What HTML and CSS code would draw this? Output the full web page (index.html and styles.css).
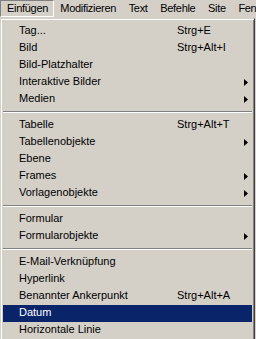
FILE: index.html
```html
<!DOCTYPE html>
<html>
<head>
<meta charset="utf-8">
<link rel="stylesheet" href="styles.css">
</head>
<body>
<div class="menubar">
  <span class="mb-item mb-open">Einfügen</span>
  <span class="mb-item">Modifizieren</span>
  <span class="mb-item">Text</span>
  <span class="mb-item">Befehle</span>
  <span class="mb-item">Site</span>
  <span class="mb-item">Fenster</span>
</div>
<div class="menu">
  <div class="item"><span class="label">Tag...</span><span class="key">Strg+E</span></div>
  <div class="item"><span class="label">Bild</span><span class="key">Strg+Alt+I</span></div>
  <div class="item"><span class="label">Bild-Platzhalter</span></div>
  <div class="item"><span class="label">Interaktive Bilder</span><svg class="arrow" width="4" height="7" viewBox="0 0 4 7"><polygon points="0,0 4,3.5 0,7"/></svg></div>
  <div class="item"><span class="label">Medien</span><svg class="arrow" width="4" height="7" viewBox="0 0 4 7"><polygon points="0,0 4,3.5 0,7"/></svg></div>
  <div class="sep"></div>
  <div class="item"><span class="label">Tabelle</span><span class="key">Strg+Alt+T</span></div>
  <div class="item"><span class="label">Tabellenobjekte</span><svg class="arrow" width="4" height="7" viewBox="0 0 4 7"><polygon points="0,0 4,3.5 0,7"/></svg></div>
  <div class="item"><span class="label">Ebene</span></div>
  <div class="item"><span class="label">Frames</span><svg class="arrow" width="4" height="7" viewBox="0 0 4 7"><polygon points="0,0 4,3.5 0,7"/></svg></div>
  <div class="item"><span class="label">Vorlagenobjekte</span><svg class="arrow" width="4" height="7" viewBox="0 0 4 7"><polygon points="0,0 4,3.5 0,7"/></svg></div>
  <div class="sep"></div>
  <div class="item"><span class="label">Formular</span></div>
  <div class="item"><span class="label">Formularobjekte</span><svg class="arrow" width="4" height="7" viewBox="0 0 4 7"><polygon points="0,0 4,3.5 0,7"/></svg></div>
  <div class="sep"></div>
  <div class="item"><span class="label">E-Mail-Verknüpfung</span></div>
  <div class="item"><span class="label">Hyperlink</span></div>
  <div class="item"><span class="label">Benannter Ankerpunkt</span><span class="key">Strg+Alt+A</span></div>
  <div class="item active"><span class="label">Datum</span></div>
  <div class="item"><span class="label">Horizontale Linie</span></div>
</div>
</body>
</html>
```

FILE: styles.css
```css
html, body {
  margin: 0;
  padding: 0;
  background: #d4d0c8;
  overflow: hidden;
}
body {
  width: 256px;
  height: 339px;
  font-family: "Liberation Sans", Arial, sans-serif;
  font-size: 11px;
  color: #000;
}
.menubar {
  display: flex;
  height: 18px;
  white-space: nowrap;
  overflow: hidden;
}
.mb-item {
  display: block;
  height: 17px;
  line-height: 16px;
  padding: 0 6.3px;
  letter-spacing: -0.3px;
  box-sizing: border-box;
  flex: none;
}
.mb-open {
  padding: 0 5px 0 6px;
  border: 1px solid;
  border-color: #808080 #ffffff #ffffff #808080;
  line-height: 14px;
}
.menu {
  width: 255px;
  box-sizing: border-box;
  border: 1px solid;
  border-color: #d4d0c8 #404040 #404040 #d4d0c8;
  box-shadow: inset 1px 1px 0 #ffffff, inset -1px -1px 0 #808080;
  padding: 4px 2px 2px 2px;
}
.item {
  display: flex;
  align-items: center;
  height: 17px;
  line-height: 14px;
  padding-bottom: 3px;
  box-sizing: border-box;
  white-space: nowrap;
}
.item .label {
  flex: 0 0 158px;
  padding-left: 16px;
  box-sizing: content-box;
  width: 158px;
}
.item .key {
  flex: none;
}
.item .arrow {
  margin-left: auto;
  margin-right: 4px;
  margin-top: 3px;
  fill: #000;
}
.item.active {
  background: #0a246a;
  color: #ffffff;
}
.sep {
  height: 2px;
  margin: 3px 0 4px 0;
  border-top: 1px solid #808080;
  border-bottom: 1px solid #ffffff;
  box-sizing: border-box;
}
```
